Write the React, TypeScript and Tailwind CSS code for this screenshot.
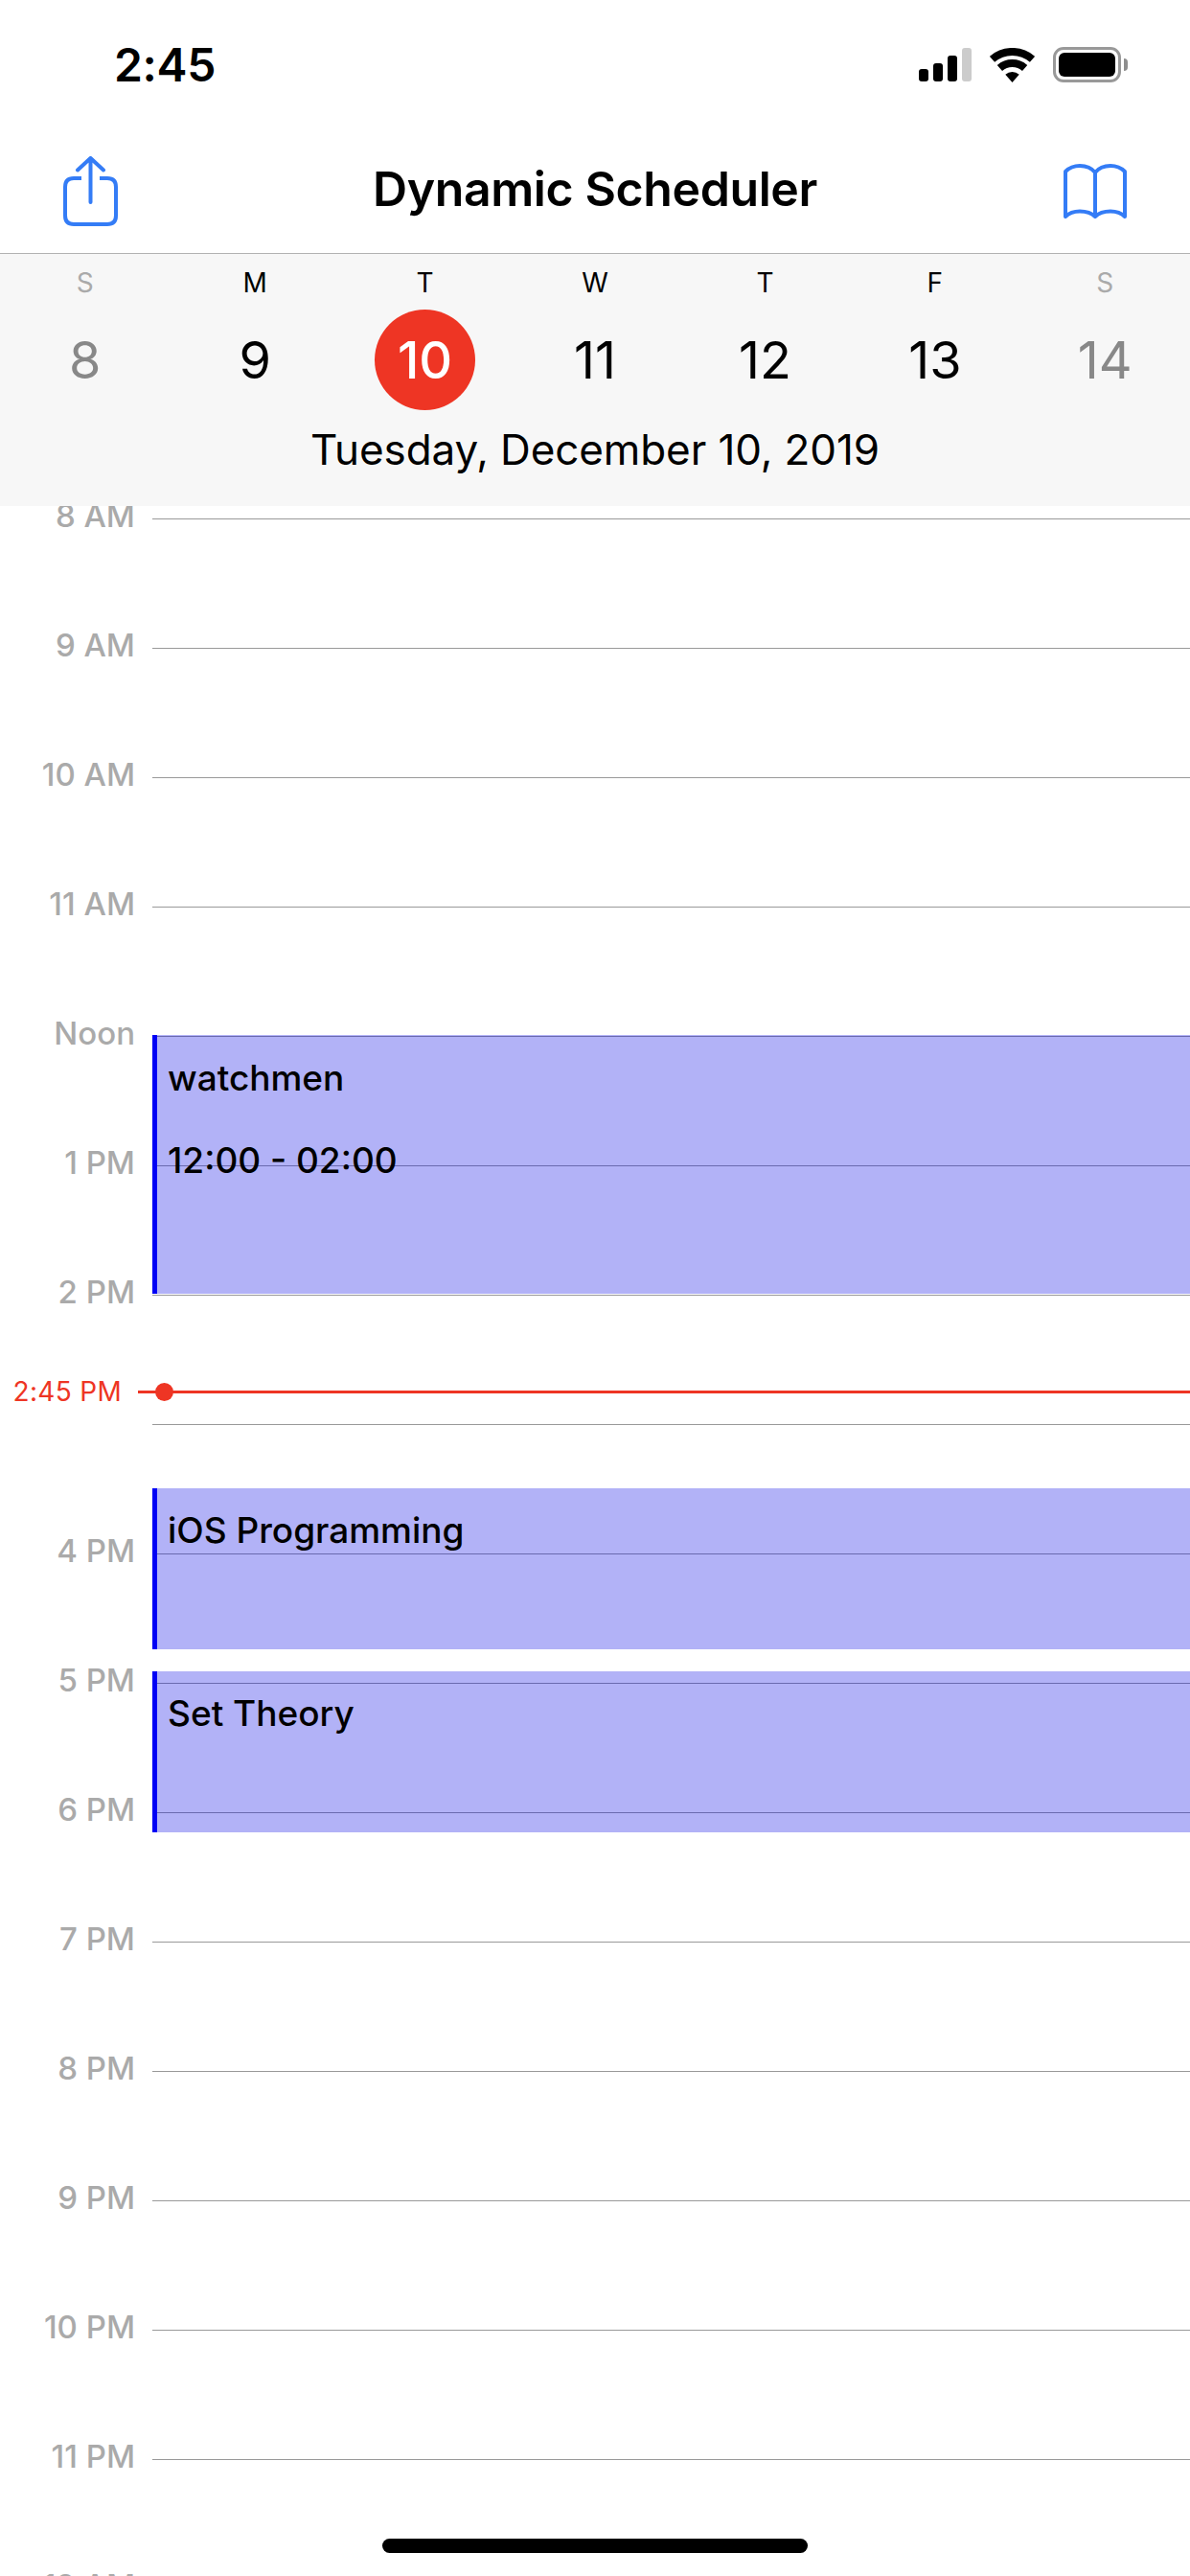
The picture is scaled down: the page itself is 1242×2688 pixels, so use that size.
import React from "react";

const weekDays = [
  { letter: "S", date: 8, weekend: true },
  { letter: "M", date: 9 },
  { letter: "T", date: 10, today: true },
  { letter: "W", date: 11 },
  { letter: "T", date: 12 },
  { letter: "F", date: 13 },
  { letter: "S", date: 14, weekend: true },
];

const hours = [
  "8 AM", "9 AM", "10 AM", "11 AM", "Noon", "1 PM", "2 PM", "", "4 PM",
  "5 PM", "6 PM", "7 PM", "8 PM", "9 PM", "10 PM", "11 PM", "12 AM",
];

function SignalIcon() {
  return (
    <div className="flex items-end gap-[5px] h-[35px]">
      <div className="w-[10px] h-[13px] rounded-[3px] bg-black" />
      <div className="w-[10px] h-[19px] rounded-[3px] bg-black" />
      <div className="w-[10px] h-[27px] rounded-[3px] bg-black" />
      <div className="w-[10px] h-[35px] rounded-[3px] bg-[#cccccc]" />
    </div>
  );
}

function WifiIcon() {
  return (
    <svg width="47" height="36" viewBox="0 0 47 36" fill="none">
      <path d="M2.5 11.8A32 32 0 0 1 44.5 11.8" stroke="#000" strokeWidth="8" />
      <path d="M10.4 20.9A20 20 0 0 1 36.6 20.9" stroke="#000" strokeWidth="8" />
      <path d="M16.3 27.7A11 11 0 0 1 30.7 27.7L23.5 36Z" fill="#000" />
    </svg>
  );
}

function BatteryIcon() {
  return (
    <div className="flex items-center">
      <div className="w-[71px] h-[37px] rounded-[11px] border-[3px] border-[#999999] p-[3px]">
        <div className="w-full h-full rounded-[6px] bg-black" />
      </div>
      <div className="w-[4px] h-[13px] ml-[3px] rounded-r-[4px] bg-[#8e8e8e]" />
    </div>
  );
}

function ShareIcon() {
  return (
    <svg width="57" height="73" viewBox="0 0 57 73" fill="none" stroke="#347cf6" strokeWidth="4" strokeLinecap="round" strokeLinejoin="round">
      <path d="M28.5 48V2M15 14.5 28.5 2 42 14.5" />
      <path d="M19 23H11Q2 23 2 32V62Q2 71 11 71H46Q55 71 55 62V32Q55 23 46 23H38" strokeLinecap="butt" />
    </svg>
  );
}

function BookIcon() {
  return (
    <svg width="66" height="57" viewBox="0 0 66 57" fill="none" stroke="#347cf6" strokeWidth="4" strokeLinejoin="round">
      <path d="M2 55V8C6 4 11 2 17 2C23 2 29 4 33 9C37 4 43 2 49 2C55 2 60 4 64 8V55C60 51 55 49.5 49 49.5C43 49.5 37 51 33 55C29 51 23 49.5 17 49.5C11 49.5 6 51 2 55Z" />
      <path d="M33 9V55" />
    </svg>
  );
}

function EventBlock({ className, children }: { className: string; children: React.ReactNode }) {
  return (
    <div className={`absolute left-[159px] right-0 bg-[#0000e6]/30 border-l-[5px] border-[#0000f5] pl-[11px] text-[37px] font-medium leading-[42px] text-black ${className}`}>
      {children}
    </div>
  );
}

export default function App() {
  return (
    <div className="flex flex-col w-[1242px] h-[2688px] overflow-hidden bg-white font-['Inter',sans-serif] relative">
      {/* Status bar */}
      <div className="flex h-[135px] shrink-0 items-start justify-between pl-[119px] pr-[65px] pt-[49px]">
        <span className="text-[48px] leading-[38px] font-semibold tracking-[-0.3px] text-black">2:45</span>
        <div className="flex items-center gap-[19px]">
          <SignalIcon />
          <WifiIcon />
          <BatteryIcon />
        </div>
      </div>

      {/* Nav bar */}
      <div className="flex h-[130px] shrink-0 items-center justify-between border-b border-[#b2b2b2] px-[66px]">
        <div className="w-[66px] -my-[6px]">
          <ShareIcon />
        </div>
        <h1 className="-mt-[5px] text-[50px] font-semibold tracking-[-0.4px] text-black">Dynamic Scheduler</h1>
        <BookIcon />
      </div>

      {/* Week strip */}
      <div className="flex flex-col h-[263px] shrink-0 bg-[#f7f7f7] z-10">
        <div className="grid grid-cols-7 pt-[18px]">
          {weekDays.map((d, i) => (
            <div key={i} className="flex flex-col items-center">
              <span className={`text-[28px] leading-[24px] ${d.weekend ? "text-[#aaaaaa]" : "text-black"}`}>{d.letter}</span>
              <div
                className={`flex items-center justify-center w-[105px] h-[105px] mt-[16px] rounded-full text-[54px] ${
                  d.today ? "bg-[#ee3524] text-white font-medium" : d.weekend ? "text-[#888888]" : "text-black"
                }`}
              >
                {d.date}
              </div>
            </div>
          ))}
        </div>
        <p className="text-center text-[44px] leading-[50px] mt-[16px] tracking-[-0.1px] text-black">Tuesday, December 10, 2019</p>
      </div>

      {/* Timeline */}
      <div className="relative flex-1 overflow-hidden">
        <div className="-mt-[54px]">
          {hours.map((h, i) => (
            <div key={i} className="flex h-[135px] items-center gap-[18px]">
              <span className="w-[141px] -mt-[5px] text-right text-[33px] font-medium text-[#aaaaaa]">{h}</span>
              <div className="flex-1 h-px bg-[#999999]" />
            </div>
          ))}
        </div>

        <EventBlock className="top-[552px] h-[270px] pt-[24px]">
          <p>watchmen</p>
          <p className="mt-[44px]">12:00 - 02:00</p>
        </EventBlock>
        <EventBlock className="top-[1025px] h-[168px] pt-[23px]">
          <p>iOS Programming</p>
        </EventBlock>
        <EventBlock className="top-[1216px] h-[168px] pt-[23px]">
          <p>Set Theory</p>
        </EventBlock>

        {/* Current time marker */}
        <div className="absolute left-0 right-0 top-[907px] flex items-center h-[34px]">
          <span className="w-[127px] text-right text-[28px] tracking-[0.3px] text-[#ee3524]">2:45 PM</span>
          <div className="relative ml-[17px] flex-1 h-[3px] bg-[#ee3524]">
            <div className="absolute left-[18px] -top-[8px] w-[19px] h-[19px] rounded-full bg-[#ee3524]" />
          </div>
        </div>
      </div>

      {/* Home indicator */}
      <div className="absolute left-[399px] top-[2649px] w-[444px] h-[15px] rounded-full bg-black z-20" />
    </div>
  );
}
